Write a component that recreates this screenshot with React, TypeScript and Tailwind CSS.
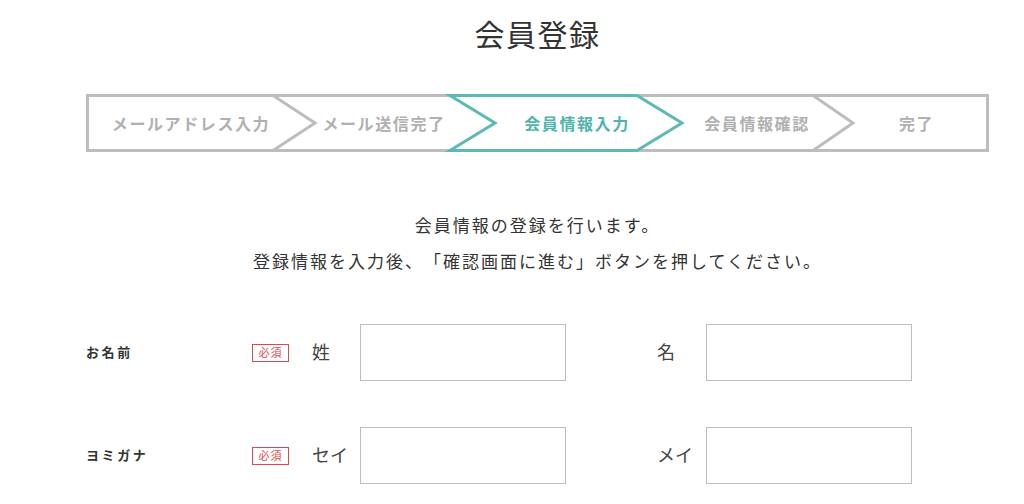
import React from "react";

const steps = [
  { label: "メールアドレス入力", w: "w-[210px]", active: false },
  { label: "メール送信完了", w: "w-[176px]", active: false },
  { label: "会員情報入力", w: "w-[210px]", active: true },
  { label: "会員情報確認", w: "w-[150px]", active: false },
  { label: "完了", w: "w-[157px] pl-[12px]", active: false },
];

const StepBar: React.FC = () => {
  return (
    <div className="relative w-[903px] h-[58px]">
      <svg
        className="absolute inset-0"
        width="903"
        height="58"
        viewBox="0 0 903 58"
        fill="none"
      >
        <rect x="1.5" y="1.5" width="900" height="55" stroke="#bdbdbd" strokeWidth="3" />
        <polyline points="187,1.5 229,29 187,56.5" stroke="#bdbdbd" strokeWidth="3" />
        <polyline points="727,1.5 767,29 727,56.5" stroke="#bdbdbd" strokeWidth="3" />
        <polygon
          points="364,1.5 551,1.5 596,29 551,56.5 364,56.5 409,29"
          fill="#ffffff"
          stroke="#5bbab3"
          strokeWidth="3"
        />
      </svg>
      <div className="relative flex h-full items-center">
        {steps.map((s) => (
          <div
            key={s.label}
            className={`${s.w} flex justify-center text-[16px] font-bold tracking-[0.1em] ${
              s.active ? "text-[#4fb4ac]" : "text-[#b0b0b0]"
            }`}
          >
            {s.label}
          </div>
        ))}
      </div>
    </div>
  );
};

const Required: React.FC = () => (
  <span className="flex h-[18px] w-[37px] items-center justify-center border border-[#e0474c] text-[11px] leading-none tracking-[0.1em] text-[#e0474c]">
    必須
  </span>
);

const FormRow: React.FC<{ label: string; first: string; second: string }> = ({
  label,
  first,
  second,
}) => (
  <div className="flex h-[57px] items-center">
    <div className="w-[166px] pb-[2px] text-[13px] font-bold tracking-[0.2em] text-[#333]">
      {label}
    </div>
    <Required />
    <div className="ml-[23px] w-[48px] pb-[2px] text-[18px] text-[#444]">{first}</div>
    <input className="h-[57px] w-[206px] border border-[#bdbdbd] bg-white outline-none" />
    <div className="ml-[91px] w-[49px] pb-[2px] text-[18px] text-[#444]">{second}</div>
    <input className="h-[57px] w-[206px] border border-[#bdbdbd] bg-white outline-none" />
  </div>
);

export default function App() {
  return (
    <div
      className="min-h-[504px] w-[1024px] bg-white"
      style={{ fontFamily: '"Noto Sans CJK JP", "Noto Sans", sans-serif' }}
    >
      <div className="ml-[86px] w-[903px] pt-[13px]">
        <h1 className="text-center text-[30px] leading-[40px] font-normal tracking-[0.05em] text-[#333]">
          会員登録
        </h1>
        <div className="mt-[41px]">
          <StepBar />
        </div>
        <div className="mt-[55px] text-center text-[17px] leading-[36px] tracking-[2px] text-[#333] [text-spacing-trim:space-all]">
          <p>会員情報の登録を行います。</p>
          <p>登録情報を入力後、「確認画面に進む」ボタンを押してください。</p>
        </div>
        <div className="mt-[45px] flex flex-col gap-[46px]">
          <FormRow label="お名前" first="姓" second="名" />
          <FormRow label="ヨミガナ" first="セイ" second="メイ" />
        </div>
      </div>
    </div>
  );
}
